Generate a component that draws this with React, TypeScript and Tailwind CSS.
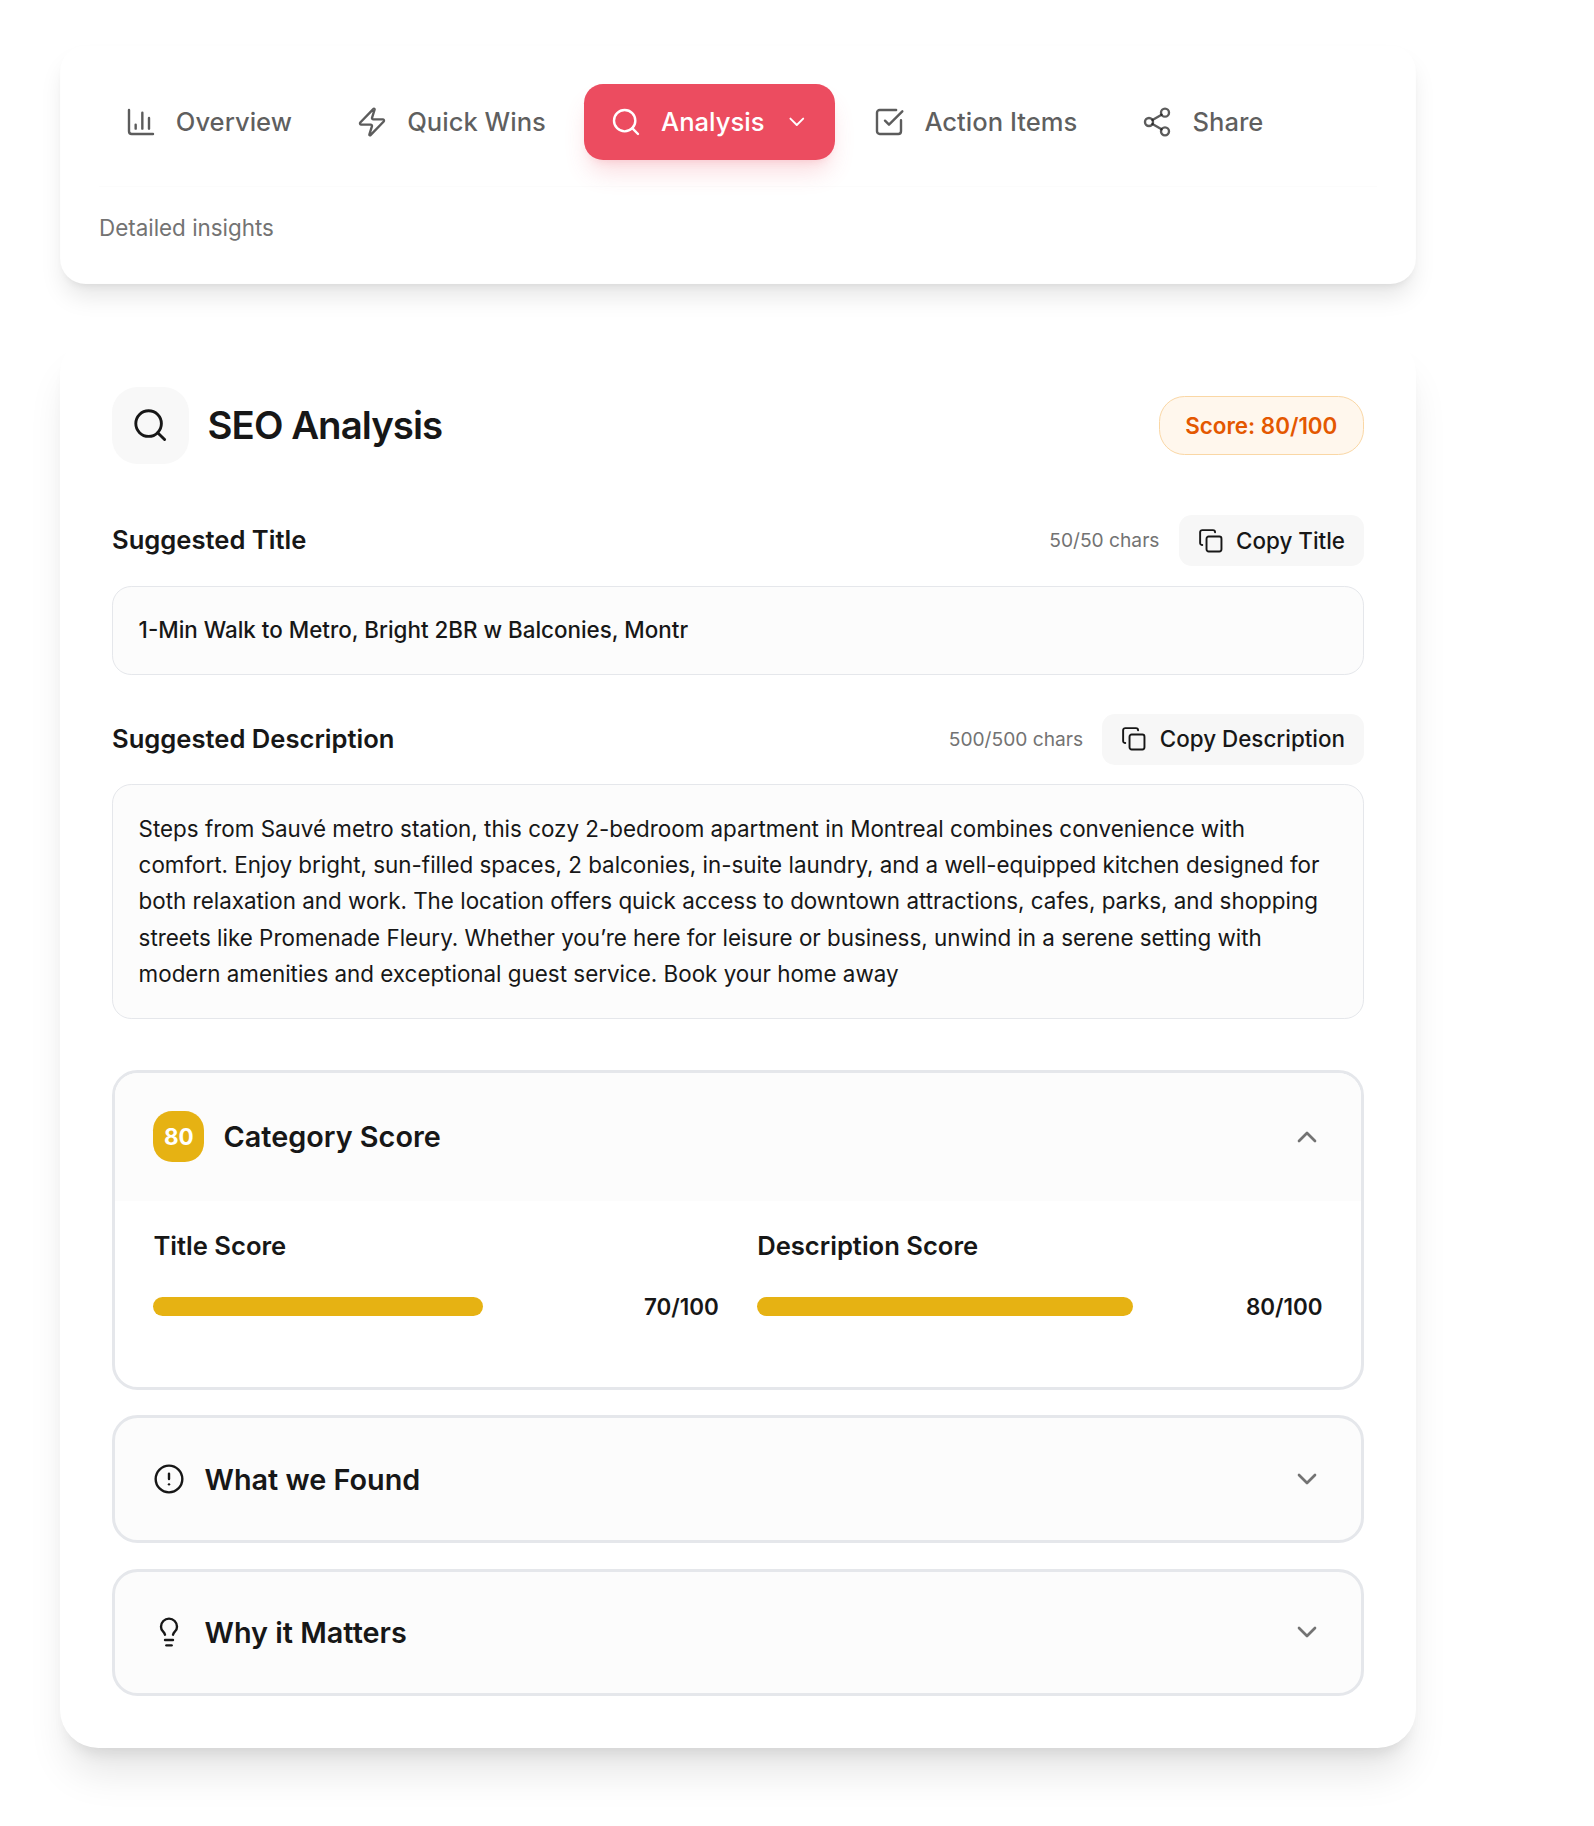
import React from "react";
import {
  ChartColumn,
  ChevronDown,
  ChevronUp,
  CircleAlert,
  Copy,
  Lightbulb,
  Search,
  Share2,
  SquareCheckBig,
  Zap,
  type LucideIcon,
} from "lucide-react";

const tabs: { label: string; icon: LucideIcon; active?: boolean }[] = [
  { label: "Overview", icon: ChartColumn },
  { label: "Quick Wins", icon: Zap },
  { label: "Analysis", icon: Search, active: true },
  { label: "Action Items", icon: SquareCheckBig },
  { label: "Share", icon: Share2 },
];

const scores = [
  { label: "Title Score", value: 70 },
  { label: "Description Score", value: 80 },
];

const TabBar: React.FC = () => (
  <nav className="rounded-[25.6px] border border-black/[0.004] bg-white px-[38px] pt-[38px] pb-[39px] shadow-[0_16px_24px_-4.8px_rgba(0,0,0,0.1),0_6.4px_9.6px_-6.4px_rgba(0,0,0,0.1)]">
    <div className="flex gap-[12.8px]">
      {tabs.map(({ label, icon: Icon, active }) => (
        <button
          key={label}
          className={
            active
              ? "flex h-[76px] items-center gap-[19.2px] rounded-[19.2px] bg-[#ec4c60] px-[25.6px] text-[25.6px] font-medium text-white shadow-[0_16px_24px_-4.8px_rgba(236,76,96,0.2),0_6.4px_9.6px_-6.4px_rgba(236,76,96,0.2)]"
              : "flex h-[76px] items-center gap-[19.2px] rounded-[19.2px] px-[25.6px] text-[25.6px] font-medium text-[#171717]/70"
          }
        >
          <Icon size={32} strokeWidth={1.8} />
          {label}
          {active && <ChevronDown size={25.6} strokeWidth={1.8} />}
        </button>
      ))}
    </div>
    <p className="mt-[26px] border-t border-black/[0.01] pt-[25px] text-[22.4px] leading-8 text-[#737373]">
      Detailed insights
    </p>
  </nav>
);

const Suggestion: React.FC<{
  title: string;
  chars: string;
  action: string;
  children: React.ReactNode;
}> = ({ title, chars, action, children }) => (
  <div>
    <div className="flex h-[51px] items-center justify-between">
      <h3 className="text-[25.6px] font-semibold">{title}</h3>
      <div className="flex items-center gap-[19.2px]">
        <span className="text-[19.2px] text-[#737373]">{chars}</span>
        <button className="flex h-[51px] items-center gap-[12.8px] rounded-[12.8px] bg-[#f7f7f7] px-[19px] text-[22.4px] font-medium">
          <Copy size={25.6} strokeWidth={1.8} />
          {action}
        </button>
      </div>
    </div>
    <div className="mt-[19.5px] rounded-[19.2px] border border-[#e5e7eb] bg-[#fcfcfc] px-[25.6px] pt-[25.6px] pb-[25px] text-[22.4px] leading-[36.4px]">
      {children}
    </div>
  </div>
);

const CollapsedPanel: React.FC<{ title: string; icon: LucideIcon }> = ({
  title,
  icon: Icon,
}) => (
  <div className="mt-[25.8px] flex h-[127.4px] items-center justify-between rounded-[25.6px] border-3 border-[#e5e7eb] bg-[#fcfcfc] px-[38.4px]">
    <div className="flex items-center gap-[19.2px]">
      <Icon size={32} strokeWidth={1.8} />
      <h3 className="text-[28.8px] font-semibold">{title}</h3>
    </div>
    <ChevronDown size={32} strokeWidth={2} className="text-[#737373]" />
  </div>
);

const CategoryScore: React.FC = () => (
  <div className="mt-[51px] overflow-hidden rounded-[25.6px] border-3 border-[#e5e7eb]">
    <div className="flex h-32 items-center justify-between bg-[#fcfcfc] px-[38.4px]">
      <div className="flex items-center gap-[19.2px]">
        <span className="flex size-[51px] items-center justify-center rounded-[19.2px] bg-[#e6b213] text-[22.4px] font-bold text-white">
          80
        </span>
        <h3 className="text-[28.8px] font-semibold">Category Score</h3>
      </div>
      <ChevronUp size={32} strokeWidth={2} className="text-[#737373]" />
    </div>
    <div className="grid grid-cols-2 gap-[38.4px] px-[38.4px] pt-[26px] pb-16">
      {scores.map(({ label, value }) => (
        <div key={label}>
          <h4 className="text-[25.6px] leading-[38.4px] font-semibold">
            {label}
          </h4>
          <div className="mt-[25.6px] flex h-8 items-center gap-[19.2px]">
            <div className="h-[19px] flex-1">
              <div
                className="h-full rounded-full bg-[#e6b213]"
                style={{ width: `${value}%` }}
              />
            </div>
            <span className="text-[22.4px] font-semibold">{value}/100</span>
          </div>
        </div>
      ))}
    </div>
  </div>
);

const App: React.FC = () => (
  <main className="h-[1826px] w-[1594px] overflow-hidden bg-white pt-[45px] pl-[60px] font-['Inter',sans-serif] text-[#171717] antialiased">
    <div className="w-[1356px]">
      <TabBar />
      <section className="mt-[51px] rounded-[38.4px] border border-transparent bg-white p-[51px] shadow-[0_32px_40px_-8px_rgba(0,0,0,0.1),0_12.8px_16px_-9.6px_rgba(0,0,0,0.1)]">
        <div className="mb-[51px] flex items-center justify-between">
          <div className="flex items-center gap-[18.6px]">
            <span className="flex size-[77px] items-center justify-center rounded-[25.6px] bg-[#f8f8f8]">
              <Search size={38.4} strokeWidth={1.8} />
            </span>
            <h2 className="text-[38.4px] font-semibold tracking-tight">
              SEO Analysis
            </h2>
          </div>
          <span className="flex h-[59px] items-center rounded-[25.6px] border border-[#fad7a5] bg-[#fff7ed] px-[25.6px] text-[22.4px] font-semibold text-[#e45800]">
            Score: 80/100
          </span>
        </div>
        <div className="flex flex-col gap-[39px]">
          <Suggestion
            title="Suggested Title"
            chars="50/50 chars"
            action="Copy Title"
          >
            <p className="font-medium">
              1-Min Walk to Metro, Bright 2BR w Balconies, Montr
            </p>
          </Suggestion>
          <Suggestion
            title="Suggested Description"
            chars="500/500 chars"
            action="Copy Description"
          >
            <p>
              Steps from Sauvé metro station, this cozy 2-bedroom apartment in
              Montreal combines convenience with comfort. Enjoy bright,
              sun-filled spaces, 2 balconies, in-suite laundry, and a
              well-equipped kitchen designed for both relaxation and work. The
              location offers quick access to downtown attractions, cafes,
              parks, and shopping streets like Promenade Fleury. Whether you’re
              here for leisure or business, unwind in a serene setting with
              modern amenities and exceptional guest service. Book your home
              away
            </p>
          </Suggestion>
        </div>
        <CategoryScore />
        <CollapsedPanel title="What we Found" icon={CircleAlert} />
        <CollapsedPanel title="Why it Matters" icon={Lightbulb} />
      </section>
    </div>
  </main>
);

export default App;
